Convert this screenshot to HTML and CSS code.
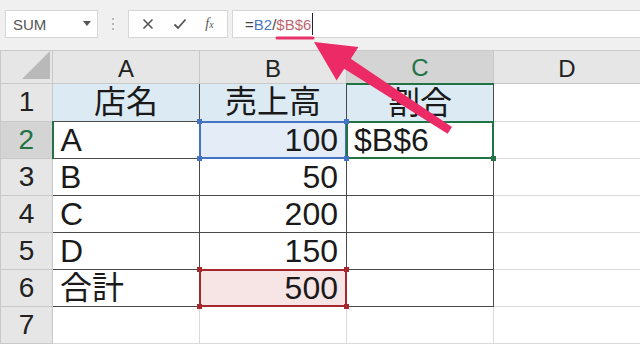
FILE: index.html
```html
<!DOCTYPE html>
<html lang="ja">
<head>
  <meta charset="UTF-8" />
  <title>Sheet</title>
  <link rel="stylesheet" href="styles.css">
</head>
<body>
  <div class="toolbar">
    <div class="namebox">
      <span>SUM</span>
      <svg class="dd" width="8" height="5" viewBox="0 0 8 5"><path d="M0 0h8L4 5z" fill="#555"/></svg>
    </div>
    <div class="grip"><i></i><i></i><i></i></div>
    <div class="fbtns">
      <svg width="12" height="12" viewBox="0 0 12 12"><path d="M1.5 1.5l9 9M10.5 1.5l-9 9" stroke="#555" stroke-width="1.6"/></svg>
      <svg width="14" height="12" viewBox="0 0 14 12"><path d="M1.5 6.5l3.5 3.5 7.5-8.5" stroke="#555" stroke-width="1.8" fill="none"/></svg>
      <span class="fx">f<sub>x</sub></span>
    </div>
    <div class="formula">=<span class="ref-blue">B2</span>/<span class="ref-red">$B$6</span><span class="cursor"></span></div>
  </div>

  <table class="sheet">
    <colgroup>
      <col class="c-rh"><col class="c-col"><col class="c-col"><col class="c-col"><col class="c-col">
    </colgroup>
    <tr class="r-head">
      <th class="corner"><svg width="28" height="28" viewBox="0 0 28 28"><path d="M28 0v28H0z" fill="#b9b9b9"/></svg></th>
      <th class="ch">A</th>
      <th class="ch">B</th>
      <th class="ch ch-active">C</th>
      <th class="ch">D</th>
    </tr>
    <tr>
      <th class="rh">1</th>
      <td class="d title">店名</td>
      <td class="d title">売上高</td>
      <td class="d title">割合</td>
      <td></td>
    </tr>
    <tr>
      <th class="rh rh-active">2</th>
      <td class="d">A</td>
      <td class="d num sel-blue">100<i class="h tl"></i><i class="h tr"></i><i class="h bl"></i><i class="h br"></i></td>
      <td class="d active">$B$6<i class="h br"></i></td>
      <td></td>
    </tr>
    <tr>
      <th class="rh">3</th>
      <td class="d">B</td>
      <td class="d num">50</td>
      <td class="d"></td>
      <td></td>
    </tr>
    <tr>
      <th class="rh">4</th>
      <td class="d">C</td>
      <td class="d num">200</td>
      <td class="d"></td>
      <td></td>
    </tr>
    <tr>
      <th class="rh">5</th>
      <td class="d">D</td>
      <td class="d num">150</td>
      <td class="d"></td>
      <td></td>
    </tr>
    <tr>
      <th class="rh">6</th>
      <td class="d">合計</td>
      <td class="d num sel-red">500<i class="h tl"></i><i class="h tr"></i><i class="h bl"></i><i class="h br"></i></td>
      <td class="d"></td>
      <td></td>
    </tr>
    <tr>
      <th class="rh">7</th>
      <td></td>
      <td></td>
      <td></td>
      <td></td>
    </tr>
  </table>

  <svg class="annot" width="640" height="344" viewBox="0 0 640 344">
    <path d="M277 38h36" stroke="#e8336a" stroke-width="3" stroke-linecap="round"/>
    <polygon points="314,42 358.4,47 350.8,58.8 452,127.1 447.6,133.8 344.2,68.8 336.6,80.6" fill="#ec2a66"/>
  </svg>
</body>
</html>
```
FILE: styles.css
```css
body {
  margin: 0;
  width: 640px;
  height: 344px;
  overflow: hidden;
  position: relative;
  background: #fff;
  font-family: "Liberation Sans", Arial, sans-serif;
}

/* formula bar */
.toolbar {
  display: flex;
  align-items: flex-start;
  height: 50px;
  box-sizing: border-box;
  padding: 10px 0 0 5px;
  background: #f0f0f0;
}

.namebox {
  width: 93px;
  height: 28px;
  box-sizing: border-box;
  background: #fff;
  border: 1px solid #d6d6d6;
  display: flex;
  align-items: center;
  justify-content: space-between;
  padding: 0 6px 0 7px;
  font-size: 15px;
  color: #555;
}

.namebox .dd {
  margin-top: -2px;
}

.grip {
  width: 30px;
  height: 28px;
  display: flex;
  flex-direction: column;
  align-items: center;
  justify-content: center;
  gap: 3px;
}

.grip i {
  width: 2px;
  height: 2px;
  background: #b8b8b8;
}

.fbtns {
  width: 100px;
  height: 28px;
  box-sizing: border-box;
  background: #fff;
  border: 1px solid #d6d6d6;
  display: flex;
  align-items: center;
  justify-content: space-around;
  padding: 0 4px;
}

.fx {
  font-family: "Liberation Serif", serif;
  font-style: italic;
  font-size: 14px;
  color: #555;
}

.fx sub {
  font-size: 10px;
  vertical-align: 0;
}

.formula {
  flex: 1;
  height: 28px;
  box-sizing: border-box;
  margin-left: 4px;
  background: #fff;
  border: 1px solid #d6d6d6;
  border-right: none;
  padding-left: 12px;
  font-size: 15px;
  line-height: 27px;
  color: #444;
  display: flex;
  align-items: center;
}

.ref-blue {
  color: #4a76c0;
}

.ref-red {
  color: #c06670;
}

.cursor {
  display: inline-block;
  width: 1px;
  height: 22px;
  background: #222;
  margin-left: 1px;
}

/* sheet */
.sheet {
  border-collapse: collapse;
  table-layout: fixed;
  width: 640px;
}

.c-rh {
  width: 52px;
}

.c-col {
  width: 147px;
}

.sheet tr {
  height: 37px;
}

.sheet tr.r-head {
  height: 33px;
}

.sheet th,
.sheet td {
  border: 1px solid #dadada;
  padding: 0;
}

.sheet th {
  background: #e6e6e6;
  border-color: #c9c9c9;
  font-weight: normal;
  color: #222;
}

.corner {
  text-align: right;
  vertical-align: bottom;
}

.corner svg {
  display: block;
  margin: 0 2px 4px auto;
}

.ch {
  font-size: 24px;
  padding-top: 3px !important;
}

.ch-active {
  background: #d4d4d4 !important;
  color: #217346 !important;
  border-bottom: 2px solid #217346 !important;
}

.rh {
  font-size: 28px;
}

.rh-active {
  background: #d4d4d4 !important;
  color: #217346 !important;
  border-right: 2px solid #217346 !important;
}

.sheet td {
  font-family: "Liberation Sans", "Noto Sans CJK JP", sans-serif;
  font-size: 32px;
  line-height: 36px;
  color: #1a1a1a;
  padding: 0 7px;
  white-space: nowrap;
}

.sheet td.d {
  border-color: #4a4a4a;
}

.sheet td.title {
  background: #dcebf3;
  text-align: center;
}

.sheet td.num {
  text-align: right;
  padding-right: 8px;
}

.sel-blue,
.sel-red,
.active {
  position: relative;
}

.sel-blue {
  background: #e3ecf7;
}

.sel-red {
  background: #f7e4e5;
}

.sel-blue::after,
.sel-red::after,
.active::after {
  content: "";
  position: absolute;
  top: -1px;
  left: -1px;
  right: -1px;
  bottom: -1px;
  border: 2px solid #4472c4;
}

.sel-red::after {
  border-color: #a5282e;
}

.active::after {
  border-color: #217346;
}

.h {
  position: absolute;
  width: 5px;
  height: 5px;
  background: #4472c4;
  z-index: 1;
}

.sel-red .h {
  background: #a5282e;
}

.active .h {
  background: #217346;
}

.h.tl { top: -3px; left: -3px; }
.h.tr { top: -3px; right: -3px; }
.h.bl { bottom: -3px; left: -3px; }
.h.br { bottom: -3px; right: -3px; }

/* annotation overlay */
.annot {
  position: absolute;
  top: 0;
  left: 0;
  pointer-events: none;
}
```
